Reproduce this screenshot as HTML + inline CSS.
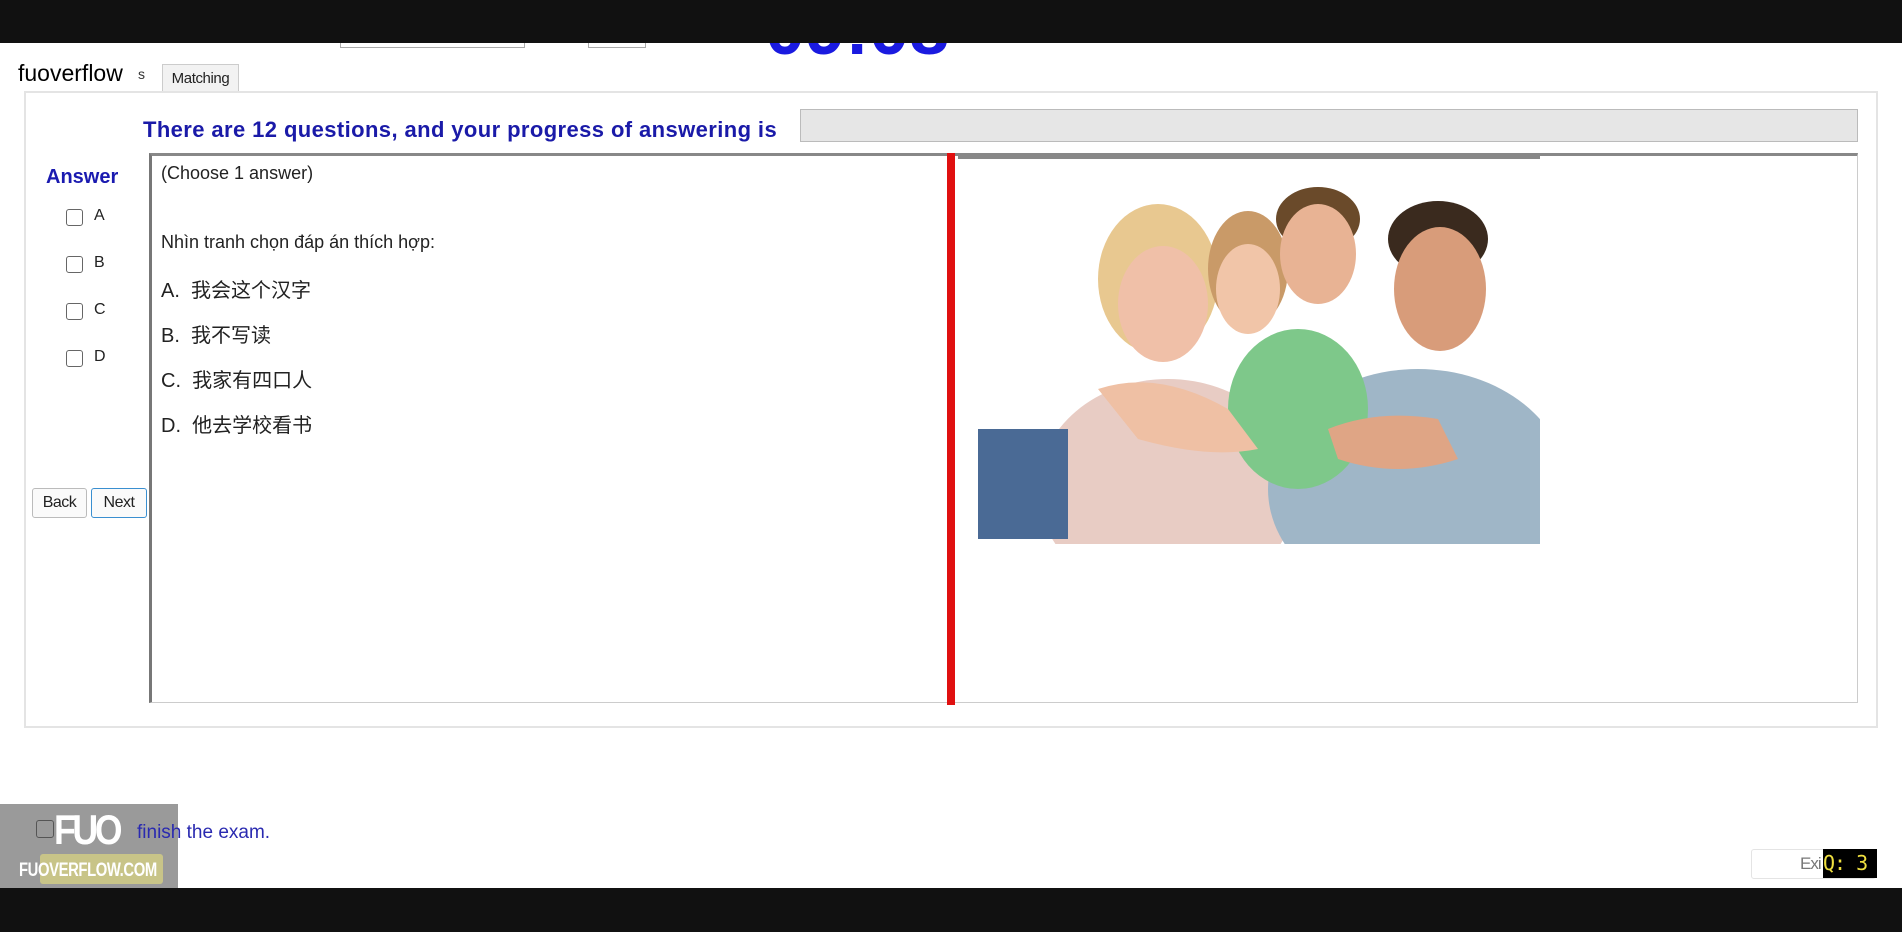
<!DOCTYPE html>
<html><head><meta charset="utf-8"><style>
*{margin:0;padding:0;box-sizing:border-box}
body{width:1902px;height:932px;background:#fff;position:relative;overflow:hidden;font-family:"Liberation Sans","Noto Sans CJK SC",sans-serif}
.a{position:absolute}
.cb{position:absolute;width:17px;height:17px;border:1.5px solid #666;border-radius:3px;background:#fff}
.lb{position:absolute;font-size:16px;color:#222}
.q{position:absolute;left:161px;font-size:18px;color:#222;white-space:nowrap}
.btn{position:absolute;border:1px solid #bbb;border-radius:3px;background:#fafafa;font-size:16px;text-align:center;line-height:28px;color:#222;letter-spacing:-0.5px}
</style></head><body>
<div class="a" style="left:340px;top:36px;width:185px;height:12px;border:1px solid #aaa;border-top:none"></div>
<div class="a" style="left:588px;top:36px;width:58px;height:12px;border:1px solid #aaa;border-top:none"></div>
<div class="a" style="left:765px;top:-6px;font-size:72px;font-weight:bold;color:#1a1ae0;line-height:72px">09:08</div>
<div class="a" style="left:0;top:0;width:1902px;height:43px;background:#111"></div>
<div class="a" style="left:18px;top:60px;font-size:23px;color:#000">fuoverflow</div>
<div class="a" style="left:138px;top:66px;font-size:14px;color:#333">s</div>
<div class="a" style="left:162px;top:64px;width:77px;height:28px;border:1px solid #ccc;border-bottom:none;background:#f2f2f2;font-size:15px;line-height:28px;text-align:center;color:#222;letter-spacing:-0.4px">Matching</div>
<div class="a" style="left:24px;top:91px;width:1854px;height:637px;border:2px solid #e4e4e4"></div>
<div class="a" style="left:143px;top:117px;font-size:22px;font-weight:bold;color:#1a1aa8;letter-spacing:0.4px;white-space:nowrap">There are 12 questions, and your progress of answering is</div>
<div class="a" style="left:800px;top:109px;width:1058px;height:33px;background:#e6e6e6;border:1px solid #bbb"></div>
<div class="a" style="left:46px;top:166px;font-size:20px;font-weight:bold;color:#1a1ab0">Answer</div>
<div class="cb" style="left:66px;top:209px"></div><div class="lb" style="left:94px;top:207px">A</div>
<div class="cb" style="left:66px;top:256px"></div><div class="lb" style="left:94px;top:254px">B</div>
<div class="cb" style="left:66px;top:303px"></div><div class="lb" style="left:94px;top:301px">C</div>
<div class="cb" style="left:66px;top:350px"></div><div class="lb" style="left:94px;top:348px">D</div>
<div class="btn" style="left:32px;top:488px;width:55px;height:30px">Back</div>
<div class="btn" style="left:91px;top:488px;width:56px;height:30px;border:1.5px solid #3a8fd0">Next</div>
<div class="a" style="left:149px;top:153px;width:1709px;height:550px;border:1px solid #ccc;border-top:3px solid #888;border-left:3px solid #777"></div>
<div class="a" style="left:947px;top:153px;width:8px;height:552px;background:#e01010"></div>
<div class="q" style="top:163px">(Choose 1 answer)</div>
<div class="q" style="top:232px">Nhìn tranh chọn đáp án thích hợp:</div>
<div class="q" style="top:274px;font-size:20px">A.&nbsp; 我会这个汉字</div>
<div class="q" style="top:319px;font-size:20px">B.&nbsp; 我不写读</div>
<div class="q" style="top:364px;font-size:20px">C.&nbsp; 我家有四口人</div>
<div class="q" style="top:409px;font-size:20px">D.&nbsp; 他去学校看书</div>
<div class="a" style="left:958px;top:156px;width:582px;height:388px;border-top:3px solid #888;overflow:hidden;background:#fff">
<svg width="582" height="388">
<ellipse cx="210" cy="330" rx="130" ry="110" fill="#e8ccc4"/>
<ellipse cx="460" cy="330" rx="150" ry="120" fill="#9fb6c7"/>
<ellipse cx="340" cy="250" rx="70" ry="80" fill="#7ec88a"/>
<rect x="20" y="270" width="90" height="110" fill="#4a6a95"/>
<ellipse cx="200" cy="120" rx="60" ry="75" fill="#e8c890"/>
<ellipse cx="205" cy="145" rx="45" ry="58" fill="#f0c0a8"/>
<ellipse cx="290" cy="110" rx="40" ry="58" fill="#c99a68"/>
<ellipse cx="290" cy="130" rx="32" ry="45" fill="#f1c5a8"/>
<ellipse cx="360" cy="60" rx="42" ry="32" fill="#6a4a2a"/>
<ellipse cx="360" cy="95" rx="38" ry="50" fill="#e8b394"/>
<ellipse cx="480" cy="80" rx="50" ry="38" fill="#3a2a1e"/>
<ellipse cx="482" cy="130" rx="46" ry="62" fill="#d89c7a"/>
<path d="M140 230 Q200 210 270 250 L300 290 Q250 300 180 280Z" fill="#efc0a4"/>
<path d="M370 270 Q420 250 480 260 L500 300 Q440 320 380 300Z" fill="#dfa585"/>
</svg></div>
<div class="a" style="left:0;top:804px;width:178px;height:84px;background:#9a9a9a"></div>
<div class="a" style="left:36px;top:820px;width:18px;height:18px;border:1.5px solid #555;border-radius:3px"></div>
<div class="a" style="left:40px;top:854px;width:123px;height:30px;background:#c8c488;border-radius:3px"></div>
<div class="a" style="left:54px;top:808px;font-size:42px;font-weight:bold;color:#fff;letter-spacing:-4px;line-height:44px;transform:scaleX(0.85);transform-origin:left">FUO</div>
<div class="a" style="left:19px;top:860px;font-size:19px;font-weight:bold;color:#fff;letter-spacing:-0.5px;white-space:nowrap;transform:scaleX(0.78);transform-origin:left">FUOVERFLOW.COM</div>
<div class="a" style="left:137px;top:822px;font-size:19px;color:#2a2ab0">finish the exam.</div>
<div class="a" style="left:1751px;top:849px;width:125px;height:30px;border:1px solid #e4e4e4;border-radius:3px"></div>
<div class="a" style="left:1800px;top:854px;font-size:17px;color:#777;letter-spacing:-1px">Exi</div>
<div class="a" style="left:1823px;top:849px;width:54px;height:29px;background:#000;color:#f0e040;font-family:'DejaVu Sans Mono',monospace;font-size:20px;line-height:29px;white-space:nowrap;overflow:hidden;letter-spacing:-1px">Q: 3</div>
<div class="a" style="left:0;top:888px;width:1902px;height:44px;background:#111"></div>
</body></html>
